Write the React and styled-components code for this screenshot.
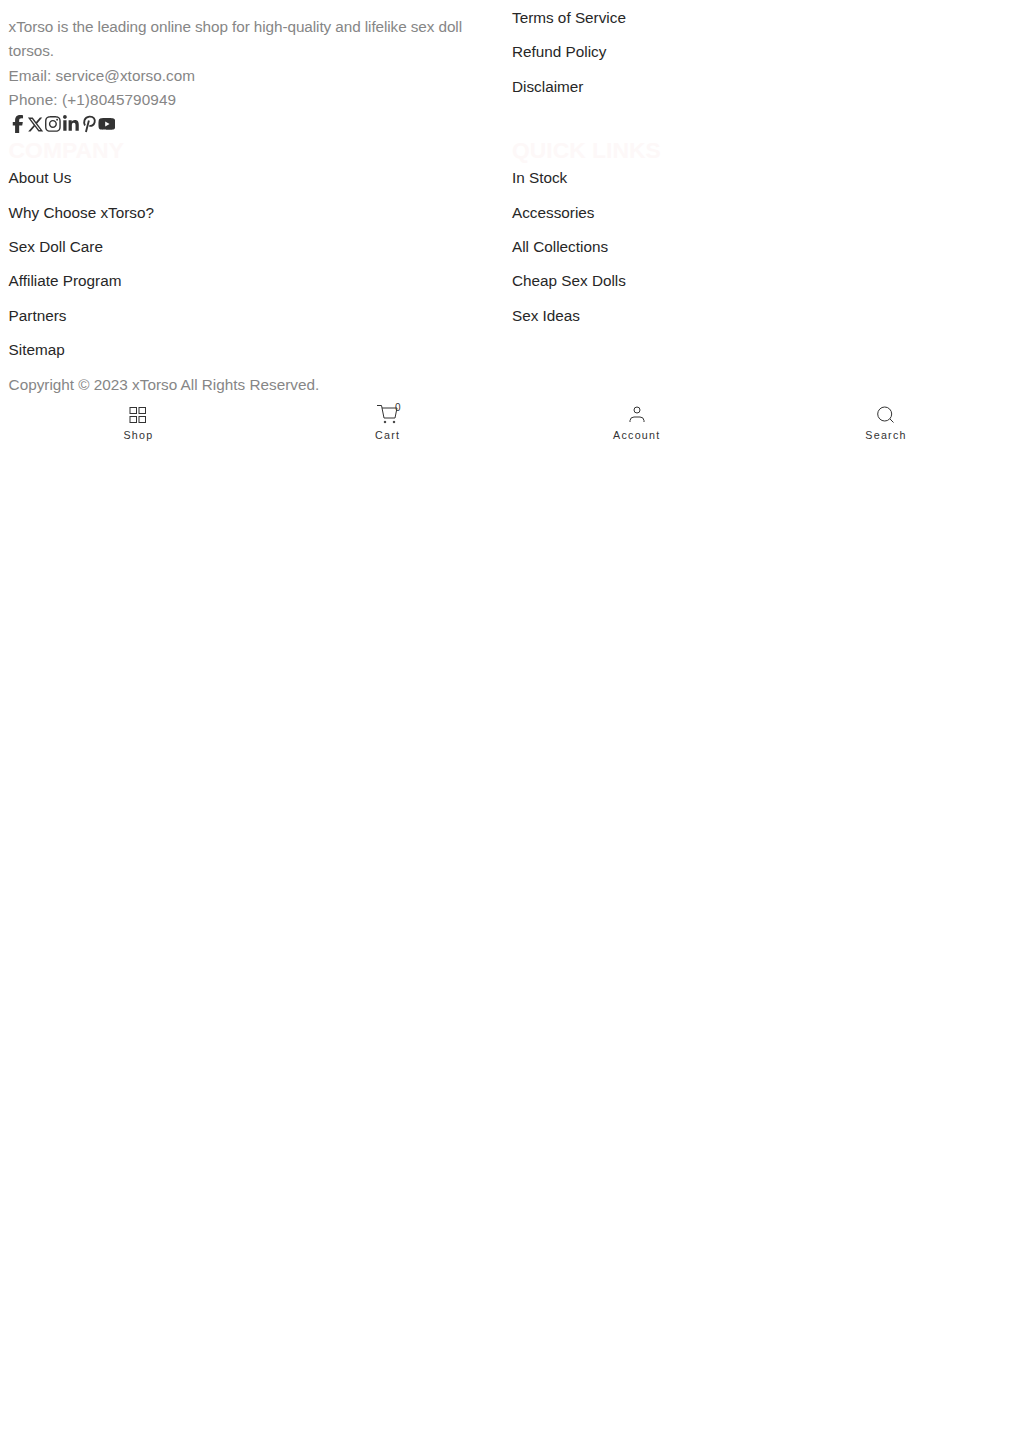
import React from 'react';
import styled, { createGlobalStyle } from 'styled-components';
import { FaFacebookF, FaXTwitter, FaInstagram, FaLinkedinIn, FaYoutube } from 'react-icons/fa6';

const GlobalStyle = createGlobalStyle`
  html, body {
    margin: 0;
    padding: 0;
    background: #fff;
    font-family: "Liberation Sans", Arial, sans-serif;
    font-size: 15.3px;
  }
`;

const Footer = styled.footer`
  padding: 0 8.6px;
`;

const Columns = styled.div`
  display: grid;
  grid-template-columns: 503.4px 1fr;
`;

const About = styled.div`
  padding-top: 14.8px;
`;

const Policies = styled.div`
  padding-top: 1px;
`;

const Text = styled.p`
  margin: 0;
  width: 480px;
  color: #868686;
  line-height: 24.5px;
  letter-spacing: ${(p) => p.$tracking || 0}px;
`;

const Socials = styled.div`
  display: flex;
  height: 21.3px;
  padding-top: 2.7px;
  align-items: flex-start;
  color: #333;
`;

const Social = styled.span`
  display: flex;
  align-items: center;
  justify-content: center;
  width: 17.8px;
  height: 18px;
  font-size: ${(p) => p.$size || 18}px;
`;

const Heading = styled.h3`
  margin: 0;
  height: 24.4px;
  font-size: 22.9px;
  line-height: 26px;
  font-weight: 700;
  color: #fdf8f8;
`;

const LinkList = styled.ul`
  list-style: none;
  margin: 0;
  padding: 0;
`;

const LinkItem = styled.li`
  height: 34.4px;
  line-height: 34.4px;
  color: #272727;
`;

const Copyright = styled.div`
  height: 34px;
  line-height: 34px;
  color: #868686;
`;

const NavBar = styled.nav`
  display: grid;
  grid-template-columns: repeat(4, 1fr);
  padding: 0 13.4px 0 13.8px;
`;

const NavItem = styled.a`
  display: flex;
  flex-direction: column;
  align-items: center;
  color: #333;
  font-size: 10.7px;
  letter-spacing: 1.25px;
  line-height: 18px;
`;

const IconBox = styled.span`
  position: relative;
  display: block;
  width: 24px;
  height: 24px;
`;

const Badge = styled.span`
  position: absolute;
  top: 1px;
  right: -1px;
  font-size: 10px;
  line-height: 10px;
  letter-spacing: 0;
`;

const NavSvg = styled.svg`
  display: block;
  width: 24px;
  height: 24px;
  fill: none;
  stroke: currentColor;
  stroke-width: 1;
`;

const PinSvg = styled.svg`
  display: block;
  width: 18px;
  height: 18px;
  fill: none;
  stroke: currentColor;
  stroke-width: 1.9;
`;

const SHOP = (
  <NavSvg viewBox="0 0 24 24">
    <rect x="4" y="5.500" width="6.500" height="6" />
    <rect x="13" y="5.500" width="6.500" height="6" />
    <rect x="4" y="14.500" width="6.500" height="6" />
    <rect x="13" y="14.500" width="6.500" height="6" />
  </NavSvg>
);

const CART = (
  <NavSvg viewBox="0 0 24 24">
    <path d="M1 3.500h4.500L8 16h11l2-10H6" />
    <circle cx="9" cy="20" r="0.800" fill="currentColor" />
    <circle cx="18" cy="20" r="0.800" fill="currentColor" />
  </NavSvg>
);

const ACCOUNT = (
  <NavSvg viewBox="0 0 24 24">
    <circle cx="12" cy="8" r="3" />
    <path d="M5 20v-1.500a4 4 0 0 1 4-3.500h6a4 4 0 0 1 4 3.500V20" />
  </NavSvg>
);

const SEARCH = (
  <NavSvg viewBox="0 0 24 24">
    <circle cx="10.700" cy="12" r="7" />
    <path d="M16 17l3.500 3.500" />
  </NavSvg>
);

const PINTEREST = (
  <PinSvg viewBox="0 0 18 18">
    <path d="M5 10.500C3.500 8 3.800 2 9.500 1.500c4.500-.3 6 3 5.300 5.700-.7 3-3.500 4.500-5.300 3.300M9 5.500 6 17" />
  </PinSvg>
);

const COMPANY = ['About Us', 'Why Choose xTorso?', 'Sex Doll Care', 'Affiliate Program', 'Partners', 'Sitemap'];
const QUICK = ['In Stock', 'Accessories', 'All Collections', 'Cheap Sex Dolls', 'Sex Ideas'];
const POLICY = ['Terms of Service', 'Refund Policy', 'Disclaimer'];

const renderLinks = (items) => (
  <LinkList>
    {items.map((t) => (
      <LinkItem key={t}>{t}</LinkItem>
    ))}
  </LinkList>
);

export default function App() {
  return (
    <>
      <GlobalStyle />
      <Footer>
        <Columns>
          <About>
            <Text $tracking={-0.08}>xTorso is the leading online shop for high-quality and lifelike sex doll torsos.</Text>
            <Text $tracking={0.04}>Email: service@xtorso.com</Text>
            <Text $tracking={0.1}>Phone: (+1)8045790949</Text>
            <Socials>
              <Social><FaFacebookF /></Social>
              <Social $size={17}><FaXTwitter /></Social>
              <Social><FaInstagram /></Social>
              <Social><FaLinkedinIn /></Social>
              <Social>{PINTEREST}</Social>
              <Social><FaYoutube /></Social>
            </Socials>
          </About>
          <Policies>{renderLinks(POLICY)}</Policies>
          <div>
            <Heading>COMPANY</Heading>
            {renderLinks(COMPANY)}
          </div>
          <div>
            <Heading>QUICK LINKS</Heading>
            {renderLinks(QUICK)}
          </div>
        </Columns>
        <Copyright>Copyright © 2023 xTorso All Rights Reserved.</Copyright>
      </Footer>
      <NavBar>
        <NavItem>
          <IconBox>{SHOP}</IconBox>
          Shop
        </NavItem>
        <NavItem>
          <IconBox>
            {CART}
            <Badge>0</Badge>
          </IconBox>
          Cart
        </NavItem>
        <NavItem>
          <IconBox>{ACCOUNT}</IconBox>
          Account
        </NavItem>
        <NavItem>
          <IconBox>{SEARCH}</IconBox>
          Search
        </NavItem>
      </NavBar>
    </>
  );
}
